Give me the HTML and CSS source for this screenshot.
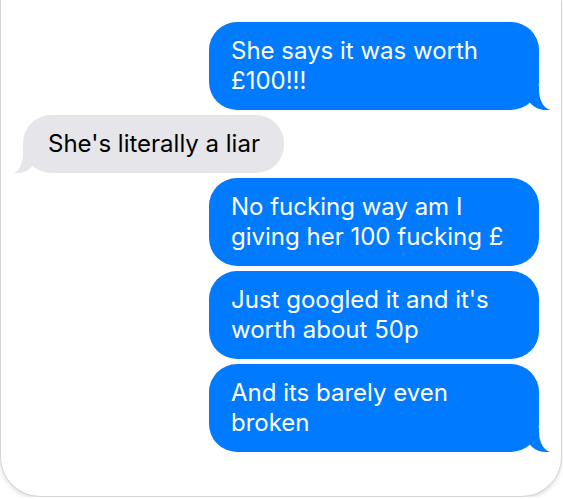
FILE: index.html
```html
<!DOCTYPE html>
<html lang="en">
<head>
  <meta charset="UTF-8">
  <title>Messages</title>
  <link rel="stylesheet" href="styles.css">
</head>
<body>
  <div class="imessage">
    <p class="from-me">She says it was worth £100!!!</p>
    <p class="from-them">She's literally a liar</p>
    <p class="from-me no-tail">No fucking way am I giving her 100 fucking £</p>
    <p class="from-me no-tail">Just googled it and it's worth about 50p</p>
    <p class="from-me">And its barely even broken</p>
  </div>
</body>
</html>
```

FILE: styles.css
```css
body {
  margin: 0;
  padding: 0;
  background: #fff;
  font-family: 'Inter', 'Liberation Sans', sans-serif;
}

.imessage {
  width: 562px;
  background: #fff;
  border: 1px solid #d4d4d4;
  border-top: none;
  border-radius: 0 0 40px 40px;
  box-shadow: 0 2px 4px rgba(0,0,0,0.12);
  display: flex;
  flex-direction: column;
  gap: 5px;
  padding: 22px 22px 44px 22px;
  box-sizing: border-box;
}

.imessage p {
  margin: 0;
  position: relative;
  max-width: 330px;
  box-sizing: border-box;
  padding: 14px 22px;
  border-radius: 28px;
  font-size: 24px;
  line-height: 30px;
  word-wrap: break-word;
}

/* the tail: a coloured block, then a white block cutting its outer curve */
.imessage p::before,
.imessage p::after {
  content: "";
  position: absolute;
  bottom: 0;
  height: 24px;
}

.from-me {
  align-self: flex-end;
  width: 330px;
  background: #007aff;
  color: #fff;
}

.from-me::before {
  right: -13px;
  width: 0;
  border-right: 26px solid #007aff;
  border-bottom-left-radius: 20px 18px;
}

.from-me::after {
  right: -20px;
  width: 20px;
  background: #fff;
  border-bottom-left-radius: 13px 20px;
}

.imessage .from-them {
  align-self: flex-start;
  padding: 14px 24px 14px 25px;
  background: #e5e5ea;
  color: #000;
}

.from-them::before {
  left: -11px;
  width: 0;
  border-left: 24px solid #e5e5ea;
  border-bottom-right-radius: 18px 18px;
}

.from-them::after {
  left: -20px;
  width: 20px;
  background: #fff;
  border-bottom-right-radius: 11px 20px;
}

.imessage .no-tail::before,
.imessage .no-tail::after {
  display: none;
}
```
